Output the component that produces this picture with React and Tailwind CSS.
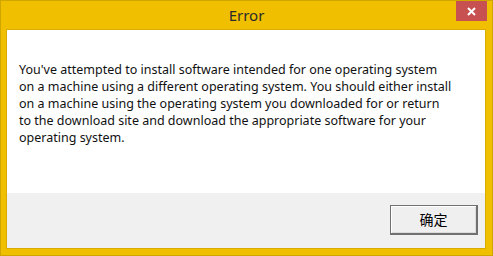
import React from "react";

const lines = [
  "You've attempted to install software intended for one operating system",
  "on a machine using a different operating system. You should either install",
  "on a machine using the operating system you downloaded for or return",
  "to the download site and download the appropriate software for your",
  "operating system.",
];

function CloseButton() {
  return (
    <div className="absolute right-[5px] top-0 flex h-[20px] w-[31px] items-center justify-center bg-[#c75050]">
      <svg width="9" height="9" viewBox="0 0 9 9">
        <path d="M1 1 L8 8 M8 1 L1 8" stroke="#ffffff" strokeWidth="2" />
      </svg>
    </div>
  );
}

export default function App() {
  return (
    <div className="flex h-[256px] w-[493px] flex-col border border-[#cfa500] bg-[#f0c000]">
      <div className="relative flex h-[28px] items-center justify-center">
        <span className="font-['Noto_Sans',sans-serif] text-[15px] text-[#2b2b2b]">Error</span>
        <CloseButton />
      </div>
      <div className="mb-[6px] ml-[5px] mr-[6px] flex flex-1 flex-col border border-[#d9ad00]">
        <div className="h-[163px] bg-white px-[12px] pt-[31px]">
          <p className="font-['Noto_Sans','Noto_Sans_CJK_SC',sans-serif] text-[12.5px] leading-[17px] text-[#111111]">
            {lines.map((l, i) => (
              <span key={i} className="block whitespace-nowrap">
                {l}
              </span>
            ))}
          </p>
        </div>
        <div className="flex flex-1 justify-end bg-[#f0f0f0] pr-[7px] pt-[12px]">
          <button className="h-[30px] w-[88px] border border-b-2 border-r-2 border-[#707070] bg-[#efefef] font-['Noto_Sans_CJK_SC',sans-serif] text-[14px] text-black shadow-[inset_1px_1px_0_#ffffff,inset_-1px_-1px_0_#dcdcdc]">
            确定
          </button>
        </div>
      </div>
    </div>
  );
}
